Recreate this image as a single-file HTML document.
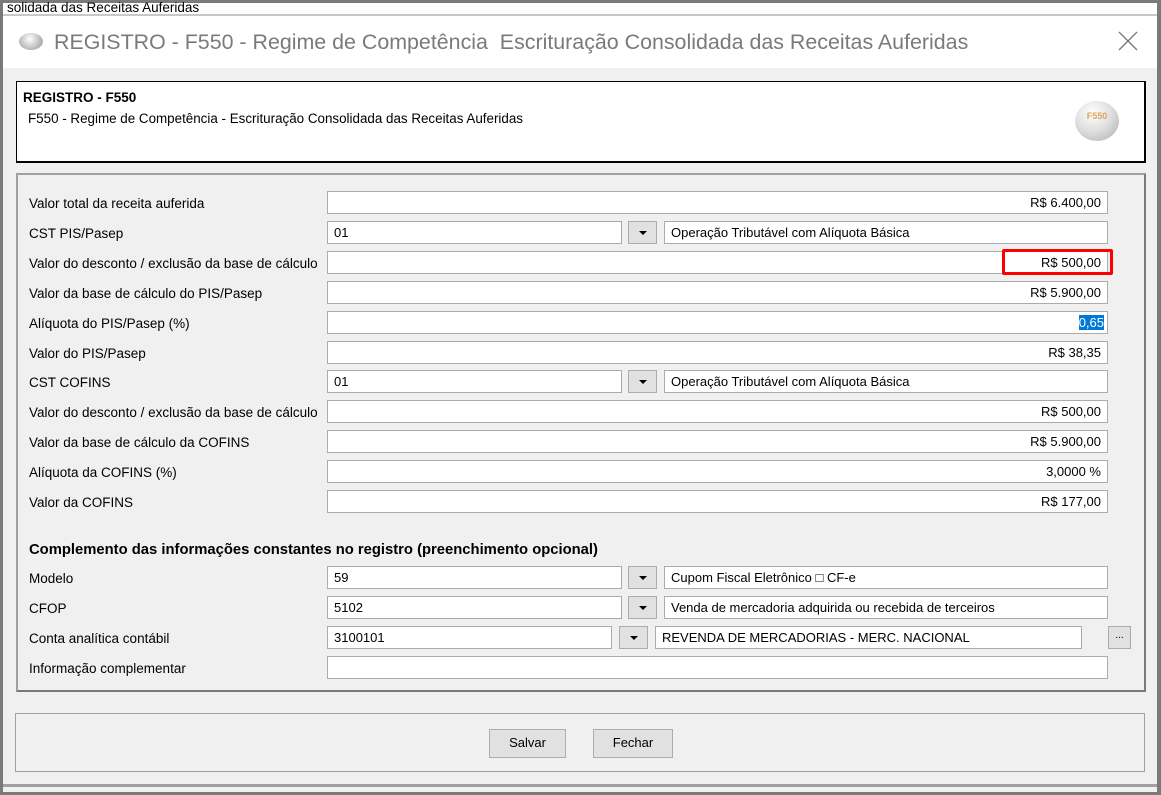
<!DOCTYPE html>
<html><head><meta charset="utf-8"><style>
*{box-sizing:border-box;margin:0;padding:0}
body{width:1161px;height:795px;overflow:hidden;background:#fff;font-family:"Liberation Sans",Arial,sans-serif;font-size:12px;color:#000;position:relative}
.a{position:absolute}
.f{position:absolute;background:#fff;border:1px solid #ababab;height:23px;line-height:21px;padding:0 6px;white-space:nowrap;font-size:13px}
.r{text-align:right}
.lbl{position:absolute;left:29px;font-size:13.5px;line-height:15px;white-space:nowrap}
.dd{position:absolute;width:29px;height:23px;border:1px solid #acacac;background:#e1e1e1}
.dd:after{content:"";position:absolute;left:10px;top:9px;border-left:4px solid transparent;border-right:4px solid transparent;border-top:4px solid #000}
.btn{position:absolute;background:#e1e1e1;border:1px solid #adadad;text-align:center;line-height:26px;font-size:13px}
</style></head><body>
<div class="a" style="left:0;top:0;width:1161px;height:795px;border:3px solid #7a7a7a;border-right-width:4px"></div>
<div class="a" style="left:7px;top:1px;font-size:13.5px;line-height:14px;white-space:nowrap">solidada das Receitas Auferidas</div>
<div class="a" style="left:3px;top:14px;width:1154px;height:2px;background:#c8c8c8"></div>
<div class="a" style="left:3px;top:16px;width:1154px;height:52px;background:#fff"></div>
<div class="a" style="left:19px;top:33px;width:24px;height:17px;border-radius:50%;background:radial-gradient(circle at 45% 35%,#fff,#bbb 60%,#999)"></div>
<div class="a" style="left:54px;top:29px;font-size:21.4px;color:#7a7a7a;line-height:26px;white-space:nowrap">REGISTRO - F550 - Regime de Competência&nbsp; Escrituração Consolidada das Receitas Auferidas</div>
<svg class="a" style="left:1118px;top:31px" width="20" height="20"><path d="M1 1L19 19M19 1L1 19" stroke="#777" stroke-width="1.3"/></svg>
<div class="a" style="left:3px;top:68px;width:1154px;height:716px;background:#f0f0f0"></div>
<div class="a" style="left:3px;top:784px;width:1154px;height:8px;background:#f0f0f0;border-top:3px solid #a0a0a0"></div>
<div class="a" style="left:16px;top:81px;width:1130px;height:82px;background:#fff;border:1px solid #000;border-right-width:2px;border-bottom-width:2px"></div>
<div class="a" style="left:23px;top:90px;font-weight:bold;font-size:13.5px">REGISTRO - F550</div>
<div class="a" style="left:28px;top:111px;font-size:13.4px;white-space:nowrap">F550 - Regime de Competência - Escrituração Consolidada das Receitas Auferidas</div>
<div class="a" style="left:1075px;top:101px;width:44px;height:40px;border-radius:50%;background:radial-gradient(circle at 40% 30%,#fff,#ddd 50%,#aaa);color:#d9a55a;font-size:9px;font-weight:bold;text-align:center;line-height:30px">F550</div>
<div class="a" style="left:16px;top:173px;width:1130px;height:519px;border:2px solid #a0a0a0;border-right-color:#7a7a7a;border-bottom-color:#7a7a7a"></div>

<div class="lbl" style="top:196px">Valor total da receita auferida</div>
<div class="f r" style="left:327px;top:191px;width:781px">R$ 6.400,00</div>
<div class="lbl" style="top:226px">CST PIS/Pasep</div>
<div class="f" style="left:327px;top:221px;width:295px">01</div><div class="dd" style="left:628px;top:221px"></div>
<div class="f" style="left:664px;top:221px;width:444px">Operação Tributável com Alíquota Básica</div>
<div class="lbl" style="top:256px">Valor do desconto / exclusão da base de cálculo</div>
<div class="f r" style="left:327px;top:251px;width:781px">R$ 500,00</div>
<div class="a" style="left:1002px;top:249px;width:111px;height:26px;border:3px solid #f00;border-radius:2px"></div>
<div class="lbl" style="top:286px">Valor da base de cálculo do PIS/Pasep</div>
<div class="f r" style="left:327px;top:281px;width:781px">R$ 5.900,00</div>
<div class="lbl" style="top:316px">Alíquota do PIS/Pasep (%)</div>
<div class="f r" style="left:327px;top:311px;width:781px;padding-right:3px"><span style="background:#0078d7;color:#fff">0,65</span></div>
<div class="lbl" style="top:346px">Valor do PIS/Pasep</div>
<div class="f r" style="left:327px;top:341px;width:781px">R$ 38,35</div>
<div class="lbl" style="top:375px">CST COFINS</div>
<div class="f" style="left:327px;top:370px;width:295px">01</div><div class="dd" style="left:628px;top:370px"></div>
<div class="f" style="left:664px;top:370px;width:444px">Operação Tributável com Alíquota Básica</div>
<div class="lbl" style="top:405px">Valor do desconto / exclusão da base de cálculo</div>
<div class="f r" style="left:327px;top:400px;width:781px">R$ 500,00</div>
<div class="lbl" style="top:435px">Valor da base de cálculo da COFINS</div>
<div class="f r" style="left:327px;top:430px;width:781px">R$ 5.900,00</div>
<div class="lbl" style="top:465px">Alíquota da COFINS (%)</div>
<div class="f r" style="left:327px;top:460px;width:781px">3,0000 %</div>
<div class="lbl" style="top:495px">Valor da COFINS</div>
<div class="f r" style="left:327px;top:490px;width:781px">R$ 177,00</div>

<div class="lbl" style="top:542px;font-weight:bold;font-size:14.8px;line-height:17px">Complemento das informações constantes no registro (preenchimento opcional)</div>
<div class="lbl" style="top:571px">Modelo</div>
<div class="f" style="left:327px;top:566px;width:295px">59</div><div class="dd" style="left:628px;top:566px"></div>
<div class="f" style="left:664px;top:566px;width:444px">Cupom Fiscal Eletrônico &#9633; CF-e</div>
<div class="lbl" style="top:601px">CFOP</div>
<div class="f" style="left:327px;top:596px;width:295px">5102</div><div class="dd" style="left:628px;top:596px"></div>
<div class="f" style="left:664px;top:596px;width:444px">Venda de mercadoria adquirida ou recebida de terceiros</div>
<div class="lbl" style="top:631px">Conta analítica contábil</div>
<div class="f" style="left:327px;top:626px;width:285px">3100101</div><div class="dd" style="left:619px;top:626px"></div>
<div class="f" style="left:655px;top:626px;width:427px">REVENDA DE MERCADORIAS - MERC. NACIONAL</div>
<div class="a" style="left:1108px;top:626px;width:23px;height:23px;border:1px solid #acacac;background:#e1e1e1;text-align:center;font-size:10px;line-height:18px">...</div>
<div class="lbl" style="top:661px">Informação complementar</div>
<div class="f" style="left:327px;top:656px;width:781px"></div>

<div class="a" style="left:15px;top:713px;width:1130px;height:59px;border:1px solid #a0a0a0"></div>
<div class="btn" style="left:489px;top:729px;width:77px;height:29px">Salvar</div>
<div class="btn" style="left:593px;top:729px;width:80px;height:29px">Fechar</div>
</body></html>
